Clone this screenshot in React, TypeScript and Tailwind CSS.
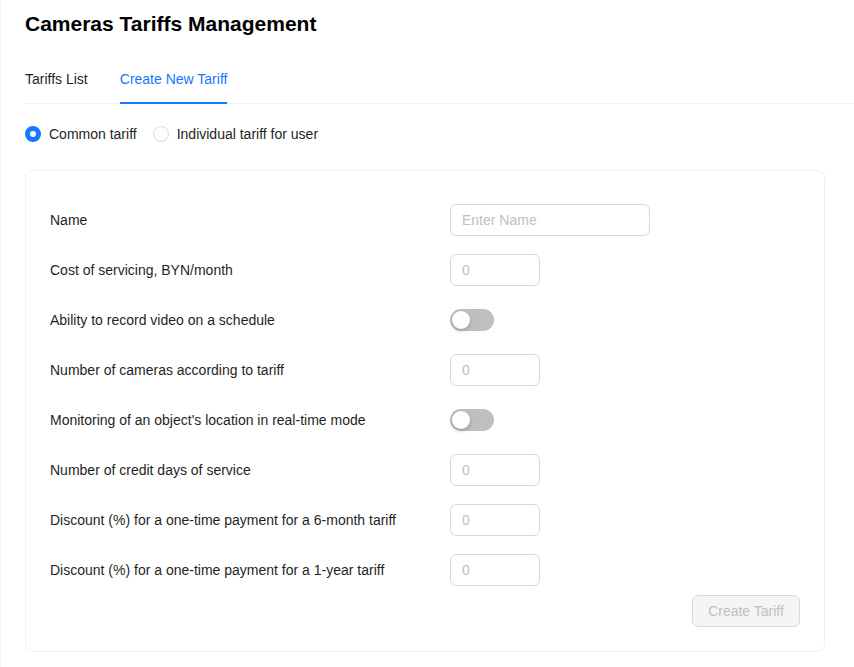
import { useState } from "react";

type Row =
  | { label: string; kind: "text"; placeholder: string }
  | { label: string; kind: "number" }
  | { label: string; kind: "switch" };

const rows: Row[] = [
  { label: "Name", kind: "text", placeholder: "Enter Name" },
  { label: "Cost of servicing, BYN/month", kind: "number" },
  { label: "Ability to record video on a schedule", kind: "switch" },
  { label: "Number of cameras according to tariff", kind: "number" },
  { label: "Monitoring of an object's location in real-time mode", kind: "switch" },
  { label: "Number of credit days of service", kind: "number" },
  { label: "Discount (%) for a one-time payment for a 6-month tariff", kind: "number" },
  { label: "Discount (%) for a one-time payment for a 1-year tariff", kind: "number" },
];

const Radio = ({ checked, label, onClick }: { checked: boolean; label: string; onClick: () => void }) => (
  <button type="button" onClick={onClick} className="flex items-center gap-2 h-[22px] mr-4">
    <span
      className={`w-4 h-4 rounded-full bg-white ${
        checked ? "border-[5px] border-[#1677ff]" : "border border-[#d9d9d9]"
      }`}
    />
    <span className="text-sm text-[#1f1f1f]">{label}</span>
  </button>
);

const Switch = () => {
  const [on, setOn] = useState(false);
  return (
    <button
      type="button"
      onClick={() => setOn(!on)}
      className={`w-[44px] h-[22px] rounded-full p-[2px] flex items-center transition-colors ${
        on ? "bg-[#1677ff] justify-end" : "bg-[#bfbfbf] justify-start"
      }`}
    >
      <span className="w-[18px] h-[18px] rounded-full bg-white shadow-[0_2px_4px_rgba(0,35,11,0.2)]" />
    </button>
  );
};

const App = () => {
  const [tab, setTab] = useState(1);
  const [mode, setMode] = useState("common");

  return (
    <div
      className="min-h-screen w-full bg-white border-l border-[#f3f3f3] pl-6 pt-3"
      style={{ fontFamily: '"Liberation Sans", Arial, sans-serif' }}
    >
      <h1 className="text-[21px] leading-6 font-bold text-black">Cameras Tariffs Management</h1>

      {/* Tabs */}
      <div className="mt-5 flex gap-8 border-b border-[#f0f0f0]">
        {["Tariffs List", "Create New Tariff"].map((t, i) => (
          <button
            key={t}
            type="button"
            onClick={() => setTab(i)}
            className={`py-3 text-sm leading-[22px] -mb-px border-b-2 ${
              tab === i ? "text-[#1677ff] border-[#1677ff]" : "text-[#1f1f1f] border-transparent"
            }`}
          >
            {t}
          </button>
        ))}
      </div>

      {/* Tariff type */}
      <div className="mt-[19px] flex items-center">
        <Radio checked={mode === "common"} label="Common tariff" onClick={() => setMode("common")} />
        <Radio checked={mode === "individual"} label="Individual tariff for user" onClick={() => setMode("individual")} />
      </div>

      {/* Form card */}
      <div className="mt-[25px] mr-[29px] border border-[#f0f0f0] rounded-lg pt-[33px] pb-6 pl-6 pr-6">
        <div className="flex flex-col gap-[18px]">
          {rows.map((row) => (
            <div key={row.label} className="flex items-center h-8">
              <div className="w-[400px] text-sm text-[#1f1f1f]">{row.label}</div>
              {row.kind === "text" && (
                <input
                  placeholder={row.placeholder}
                  className="w-[200px] h-8 px-[11px] text-sm border border-[#d9d9d9] rounded-md outline-none placeholder:text-[#bfbfbf]"
                />
              )}
              {row.kind === "number" && (
                <input
                  placeholder="0"
                  className="w-[90px] h-8 px-[11px] text-sm border border-[#d9d9d9] rounded-md outline-none placeholder:text-[#bfbfbf]"
                />
              )}
              {row.kind === "switch" && <Switch />}
            </div>
          ))}
        </div>
        <div className="flex justify-end mt-[9px]">
          <button
            type="button"
            disabled
            className="w-[108px] h-8 text-sm text-[#bfbfbf] bg-[#f5f5f5] border border-[#d9d9d9] rounded-md cursor-not-allowed"
          >
            Create Tariff
          </button>
        </div>
      </div>
    </div>
  );
};

export default App;
